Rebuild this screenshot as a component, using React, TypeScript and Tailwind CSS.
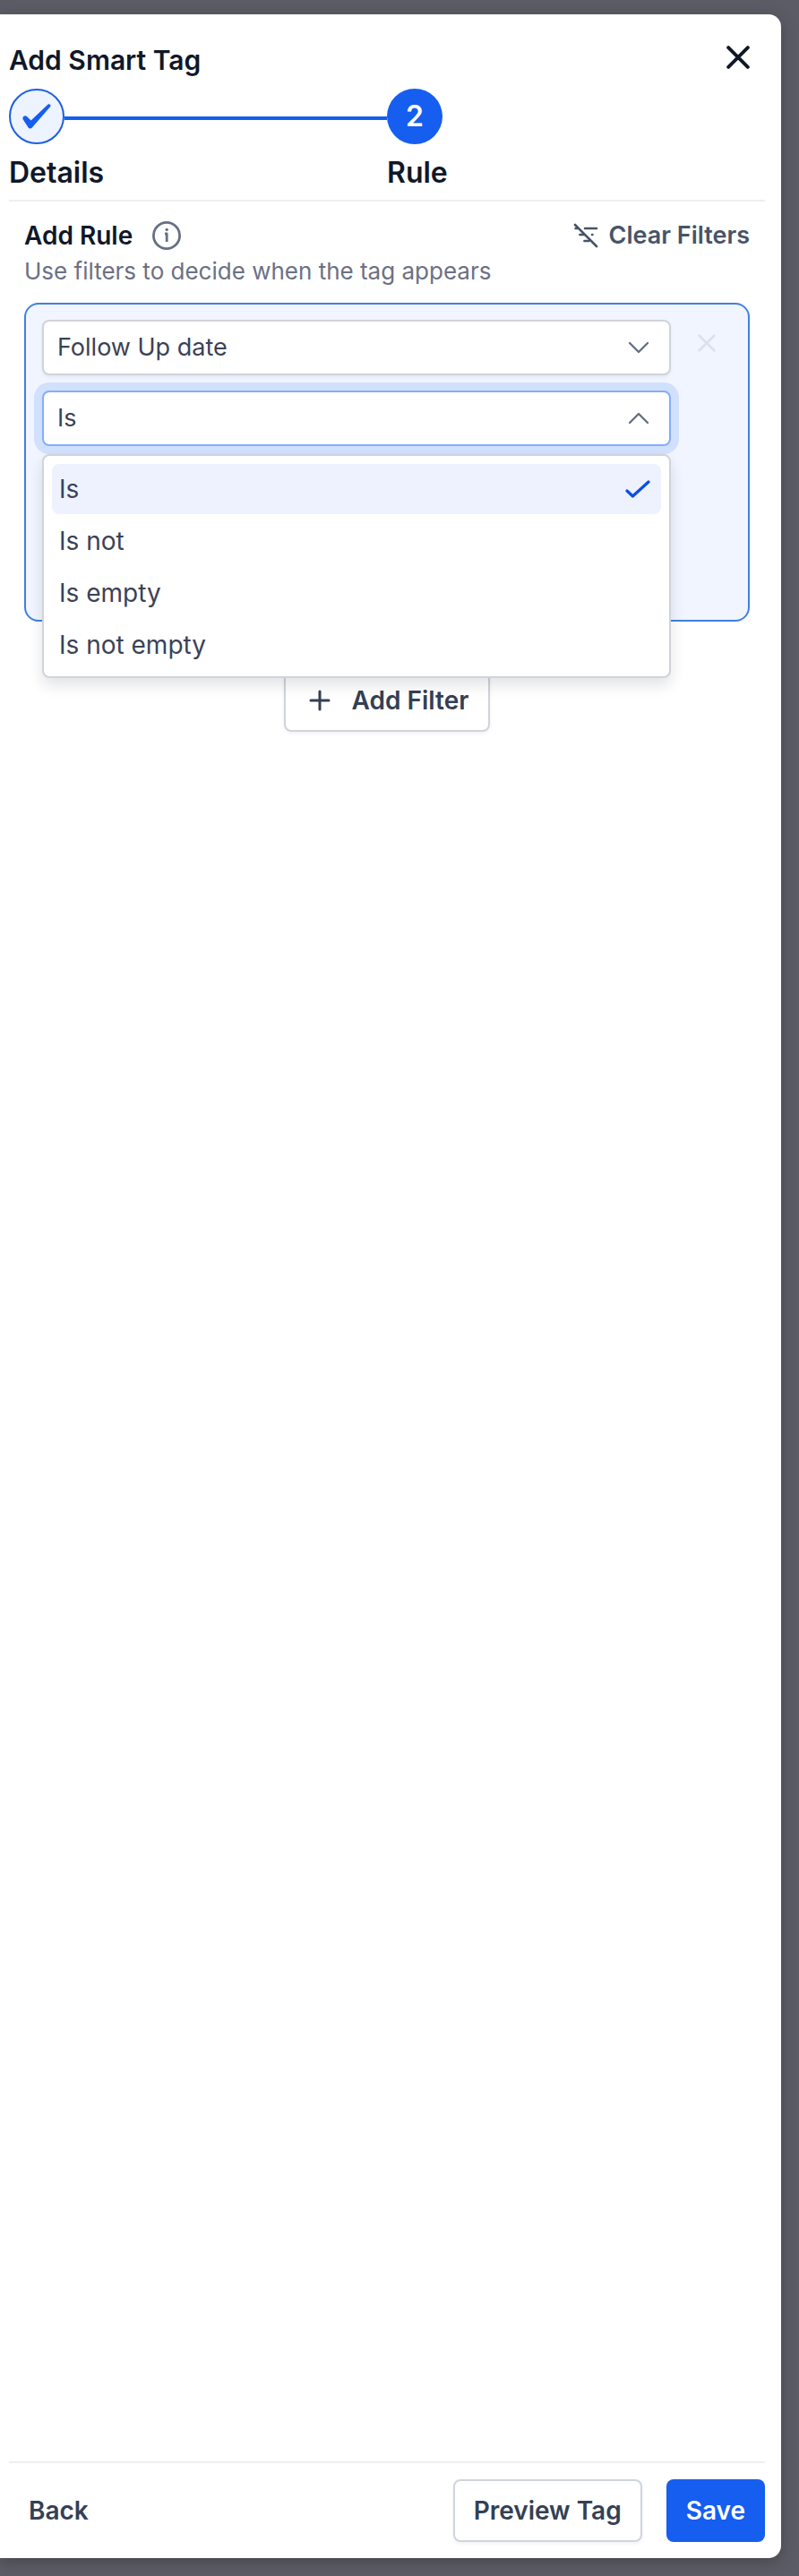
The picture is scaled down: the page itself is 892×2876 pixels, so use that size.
import { useState } from "react";

const FIELDS = ["Follow Up date", "Status", "Owner"];
const OPERATORS = ["Is", "Is not", "Is empty", "Is not empty"];

function CloseIcon({ size, stroke }: { size: number; stroke: number }) {
  return (
    <svg
      viewBox="0 0 24 24"
      width={size}
      height={size}
      fill="none"
      stroke="currentColor"
      strokeWidth={stroke}
      strokeLinecap="round"
      aria-hidden="true"
    >
      <path d="M2 2L22 22M22 2L2 22" />
    </svg>
  );
}

// Chunky tick of the completed step, tapering at the short arm.
function StepTick() {
  return (
    <svg viewBox="0 0 32 28" width="32" height="28" fill="currentColor" aria-hidden="true">
      <path d="M28.6 0.6C30 -0.4 32.4 1.2 31.2 3L10.8 26.6C9.8 27.8 7.6 27.8 6.7 26.5L0.8 17.6C-0.8 15 2.6 11.8 5.2 14.2L9.6 18.4Z" />
    </svg>
  );
}

function InfoIcon() {
  return (
    <svg
      viewBox="0 0 32 32"
      width="32"
      height="32"
      fill="none"
      stroke="currentColor"
      strokeWidth="2.8"
      aria-hidden="true"
    >
      <circle cx="16" cy="16" r="14.6" />
      <path d="M14 14H16.2V23" strokeWidth="2.8" strokeLinejoin="round" />
      <circle cx="16.2" cy="9.4" r="1.7" fill="currentColor" stroke="none" />
    </svg>
  );
}

function ClearFiltersIcon() {
  return (
    <svg
      viewBox="0 0 28 28"
      width="28"
      height="28"
      fill="none"
      stroke="currentColor"
      strokeWidth="2.6"
      strokeLinecap="round"
      aria-hidden="true"
    >
      <path d="M2 2L26 26" />
      <path d="M13 6H26M2.6 6H5" />
      <path d="M7.4 13H12M21 13H21.4" />
      <path d="M12.4 20H17.6" />
    </svg>
  );
}

function Chevron({ open = false }: { open?: boolean }) {
  return (
    <svg
      viewBox="0 0 24 14"
      width="24"
      height="14"
      fill="none"
      stroke="currentColor"
      strokeWidth="2.4"
      strokeLinecap="round"
      strokeLinejoin="round"
      aria-hidden="true"
      className="pointer-events-none absolute top-6 right-6 text-[#667085]"
    >
      <path d={open ? "M2 12L12 2L22 12" : "M2 2L12 12L22 2"} />
    </svg>
  );
}

function OptionTick() {
  return (
    <svg
      viewBox="0 0 28 22"
      width="28"
      height="22"
      fill="none"
      stroke="currentColor"
      strokeWidth="3.2"
      strokeLinecap="round"
      strokeLinejoin="round"
      aria-hidden="true"
    >
      <path d="M2 13L8.4 19L26 3" />
    </svg>
  );
}

function Stepper() {
  return (
    <ol className="mt-3 grid grid-cols-2 text-[32px] leading-10 font-semibold text-[#101828]">
      <li>
        <div className="flex items-center">
          <span className="flex size-[62px] shrink-0 items-center justify-center rounded-full border-2 border-[#1d5fe0] bg-[#edf3ff] text-[#155eef]">
            <StepTick />
          </span>
          <span className="mt-1 h-1 flex-1 bg-[#155eef]" />
        </div>
        <div className="mt-3">Details</div>
      </li>
      <li aria-current="step">
        <span className="flex size-[62px] items-center justify-center rounded-full bg-[#155eef] text-white">
          2
        </span>
        <div className="mt-3">Rule</div>
      </li>
    </ol>
  );
}

export default function App() {
  const [field, setField] = useState(FIELDS[0]);
  const [operator, setOperator] = useState(OPERATORS[0]);
  const [open, setOpen] = useState(true);

  return (
    <div className="flex min-h-screen bg-[#5c5c66] pt-4 pr-5 pb-5 font-['Inter',sans-serif]">
      <main className="flex flex-1 flex-col rounded-r-[14px] bg-white pr-[18px] pl-2.5 shadow-[0_4px_16px_rgba(50,50,50,0.5)]">
        <header className="border-b-2 border-[#efeff1] pt-[31px] pb-2.5">
          <div className="flex items-start justify-between">
            <h1 className="text-[30px] leading-10 font-semibold text-[#101828]">Add Smart Tag</h1>
            <button
              type="button"
              aria-label="Close"
              className="mr-[17px] flex h-[34px] items-center text-[#101828]"
            >
              <CloseIcon size={26} stroke={3.6} />
            </button>
          </div>
          <Stepper />
        </header>

        <section className="flex-1 px-[17px] pt-5">
          <div className="flex items-center justify-between">
            <div className="flex items-center gap-[22px]">
              <h2 className="text-[28px] leading-9 font-semibold text-[#101828]">Add Rule</h2>
              <button type="button" aria-label="About rules" className="text-[#667085]">
                <InfoIcon />
              </button>
            </div>
            <button
              type="button"
              className="flex items-center gap-3 text-[27px] leading-9 font-semibold text-[#475467]"
            >
              <ClearFiltersIcon />
              Clear Filters
            </button>
          </div>
          <p className="mt-1 text-[26px] leading-9 text-[#6b7085]">
            Use filters to decide when the tag appears
          </p>

          <div className="mt-[17px] flex min-h-[356px] items-start rounded-2xl border-2 border-[#4080e0] bg-[#f0f5ff] pt-[17px] pr-[26px] pl-[18px]">
            <div className="flex flex-1 flex-col gap-[17px]">
              <div className="relative">
                <select
                  aria-label="Field"
                  value={field}
                  onChange={(e) => setField(e.target.value)}
                  className="h-[62px] w-full appearance-none rounded-lg border-2 border-[#d0d3dc] bg-white pl-[15px] text-[27px] text-[#3b4256] shadow-[0_2px_4px_rgba(16,24,40,0.06)]"
                >
                  {FIELDS.map((f) => (
                    <option key={f}>{f}</option>
                  ))}
                </select>
                <Chevron />
              </div>

              <div className="relative">
                <select
                  aria-label="Condition"
                  value={operator}
                  onChange={(e) => setOperator(e.target.value)}
                  className="h-[62px] w-full appearance-none rounded-lg border-2 border-[#84adff] bg-white pl-[15px] text-[27px] text-[#3b4256] shadow-[0_0_0_9px_#d1e0fd] outline-none"
                >
                  {OPERATORS.map((o) => (
                    <option key={o}>{o}</option>
                  ))}
                </select>
                <Chevron open={open} />

                {open && (
                  <div
                    role="listbox"
                    aria-label="Condition options"
                    className="absolute inset-x-0 top-[71px] z-10 flex flex-col gap-0.5 rounded-lg border-2 border-[#d0d3da] bg-white px-[9px] pt-[9px] pb-[7px] shadow-[0_8px_16px_rgba(16,24,40,0.12)]"
                  >
                    {OPERATORS.map((o) => (
                      <button
                        key={o}
                        type="button"
                        role="option"
                        aria-selected={o === operator}
                        onClick={() => {
                          setOperator(o);
                          setOpen(false);
                        }}
                        className={
                          "flex h-14 w-full items-center justify-between rounded-lg pr-3 pl-2 text-[28px] text-[#3b4256] " +
                          (o === operator ? "bg-[#eef2ff]" : "bg-white")
                        }
                      >
                        {o}
                        {o === operator && (
                          <span className="text-[#0b4fdf]">
                            <OptionTick />
                          </span>
                        )}
                      </button>
                    ))}
                  </div>
                )}
              </div>
            </div>
            <button
              type="button"
              aria-label="Remove filter"
              className="ml-5 flex h-[52px] w-10 items-center justify-center text-[#dde1eb]"
            >
              <CloseIcon size={20} stroke={3.4} />
            </button>
          </div>

          <div className="mt-[53px] flex justify-center">
            <button
              type="button"
              className="flex h-[70px] items-center gap-6 rounded-lg border-2 border-[#d0d3da] bg-white pr-[22px] pl-[26px] text-[28px] font-semibold text-[#344054] shadow-[0_2px_4px_rgba(16,24,40,0.06)]"
            >
              <svg
                viewBox="0 0 24 24"
                width="24"
                height="24"
                fill="none"
                stroke="currentColor"
                strokeWidth="3"
                strokeLinecap="round"
                aria-hidden="true"
              >
                <path d="M12 2V22M2 12H22" />
              </svg>
              Add Filter
            </button>
          </div>
        </section>

        <footer className="flex items-center justify-between border-t-2 border-[#efeff1] pt-[18px] pb-[18px] text-[28px] font-semibold text-[#344054]">
          <button type="button" className="h-[70px] px-[22px]">
            Back
          </button>
          <div className="flex gap-[27px]">
            <button
              type="button"
              className="h-[70px] rounded-lg border-2 border-[#d0d5dd] bg-white px-[21px] shadow-[0_2px_4px_rgba(16,24,40,0.06)]"
            >
              Preview Tag
            </button>
            <button type="button" className="h-[70px] rounded-lg bg-[#155eef] px-[22px] text-white">
              Save
            </button>
          </div>
        </footer>
      </main>
    </div>
  );
}
